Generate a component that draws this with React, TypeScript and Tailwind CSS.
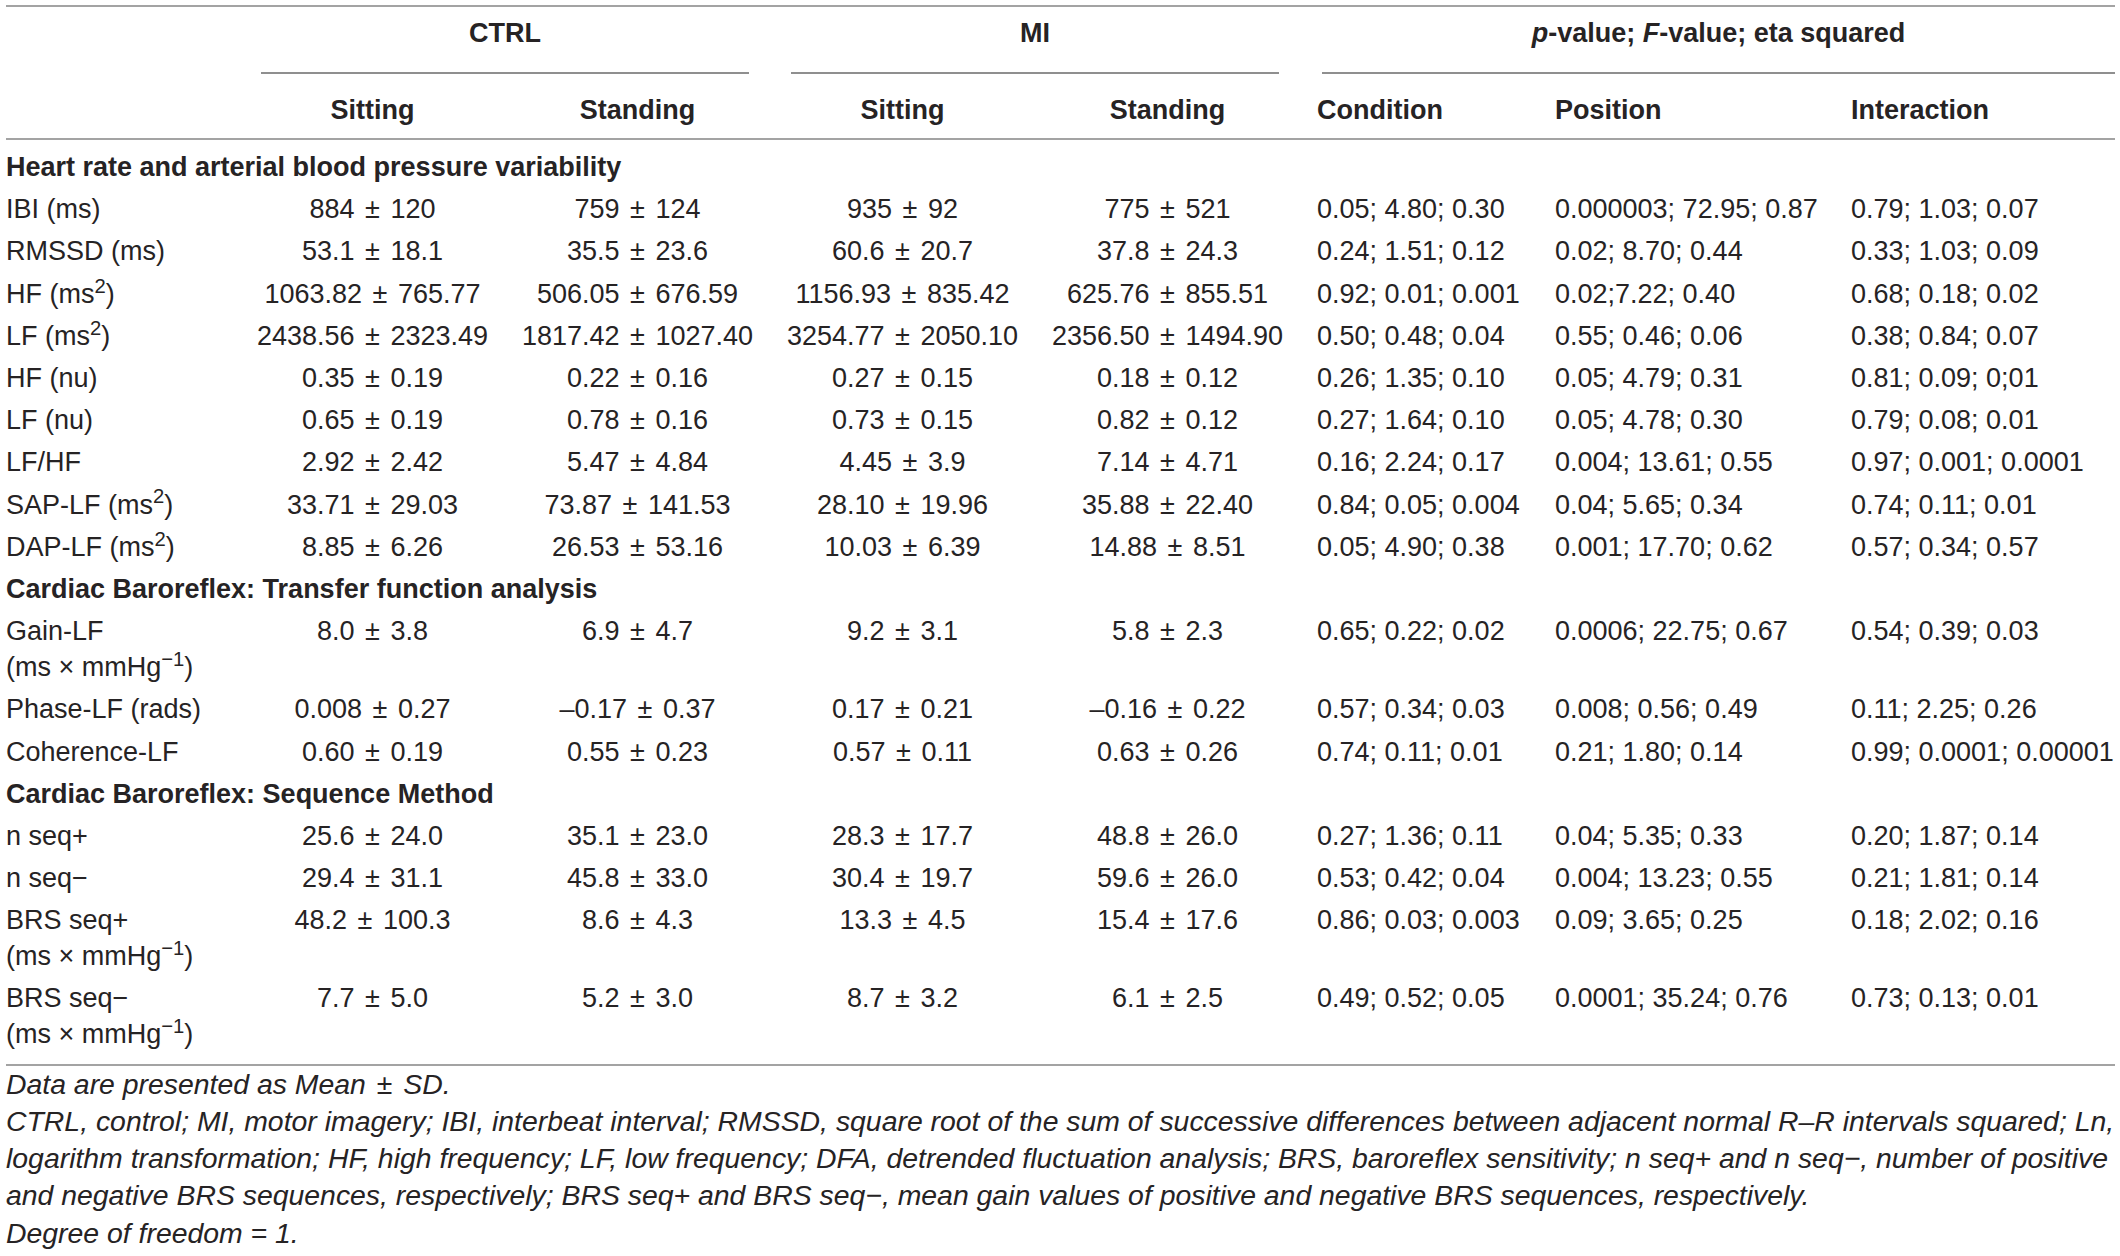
import type { ReactNode } from 'react'

const COLS = 'grid grid-cols-[234px_265px_265px_265px_265px_238px_296px_281px]'

type DataRow = { label: ReactNode; vals: string[]; stats: string[] }
type Row = { section: string } | DataRow

const ms2 = (pre: string) => (
  <>
    {pre} (ms<sup>2</sup>)
  </>
)

const gain = (pre: string) => (
  <>
    {pre}
    <br />
    (ms × mmHg<sup>−1</sup>)
  </>
)

const ROWS: Row[] = [
  { section: 'Heart rate and arterial blood pressure variability' },
  { label: 'IBI (ms)', vals: ['884 ± 120', '759 ± 124', '935 ± 92', '775 ± 521'], stats: ['0.05; 4.80; 0.30', '0.000003; 72.95; 0.87', '0.79; 1.03; 0.07'] },
  { label: 'RMSSD (ms)', vals: ['53.1 ± 18.1', '35.5 ± 23.6', '60.6 ± 20.7', '37.8 ± 24.3'], stats: ['0.24; 1.51; 0.12', '0.02; 8.70; 0.44', '0.33; 1.03; 0.09'] },
  { label: ms2('HF'), vals: ['1063.82 ± 765.77', '506.05 ± 676.59', '1156.93 ± 835.42', '625.76 ± 855.51'], stats: ['0.92; 0.01; 0.001', '0.02;7.22; 0.40', '0.68; 0.18; 0.02'] },
  { label: ms2('LF'), vals: ['2438.56 ± 2323.49', '1817.42 ± 1027.40', '3254.77 ± 2050.10', '2356.50 ± 1494.90'], stats: ['0.50; 0.48; 0.04', '0.55; 0.46; 0.06', '0.38; 0.84; 0.07'] },
  { label: 'HF (nu)', vals: ['0.35 ± 0.19', '0.22 ± 0.16', '0.27 ± 0.15', '0.18 ± 0.12'], stats: ['0.26; 1.35; 0.10', '0.05; 4.79; 0.31', '0.81; 0.09; 0;01'] },
  { label: 'LF (nu)', vals: ['0.65 ± 0.19', '0.78 ± 0.16', '0.73 ± 0.15', '0.82 ± 0.12'], stats: ['0.27; 1.64; 0.10', '0.05; 4.78; 0.30', '0.79; 0.08; 0.01'] },
  { label: 'LF/HF', vals: ['2.92 ± 2.42', '5.47 ± 4.84', '4.45 ± 3.9', '7.14 ± 4.71'], stats: ['0.16; 2.24; 0.17', '0.004; 13.61; 0.55', '0.97; 0.001; 0.0001'] },
  { label: ms2('SAP-LF'), vals: ['33.71 ± 29.03', '73.87 ± 141.53', '28.10 ± 19.96', '35.88 ± 22.40'], stats: ['0.84; 0.05; 0.004', '0.04; 5.65; 0.34', '0.74; 0.11; 0.01'] },
  { label: ms2('DAP-LF'), vals: ['8.85 ± 6.26', '26.53 ± 53.16', '10.03 ± 6.39', '14.88 ± 8.51'], stats: ['0.05; 4.90; 0.38', '0.001; 17.70; 0.62', '0.57; 0.34; 0.57'] },
  { section: 'Cardiac Baroreflex: Transfer function analysis' },
  { label: gain('Gain-LF'), vals: ['8.0 ± 3.8', '6.9 ± 4.7', '9.2 ± 3.1', '5.8 ± 2.3'], stats: ['0.65; 0.22; 0.02', '0.0006; 22.75; 0.67', '0.54; 0.39; 0.03'] },
  { label: 'Phase-LF (rads)', vals: ['0.008 ± 0.27', '–0.17 ± 0.37', '0.17 ± 0.21', '–0.16 ± 0.22'], stats: ['0.57; 0.34; 0.03', '0.008; 0.56; 0.49', '0.11; 2.25; 0.26'] },
  { label: 'Coherence-LF', vals: ['0.60 ± 0.19', '0.55 ± 0.23', '0.57 ± 0.11', '0.63 ± 0.26'], stats: ['0.74; 0.11; 0.01', '0.21; 1.80; 0.14', '0.99; 0.0001; 0.00001'] },
  { section: 'Cardiac Baroreflex: Sequence Method' },
  { label: 'n seq+', vals: ['25.6 ± 24.0', '35.1 ± 23.0', '28.3 ± 17.7', '48.8 ± 26.0'], stats: ['0.27; 1.36; 0.11', '0.04; 5.35; 0.33', '0.20; 1.87; 0.14'] },
  { label: 'n seq−', vals: ['29.4 ± 31.1', '45.8 ± 33.0', '30.4 ± 19.7', '59.6 ± 26.0'], stats: ['0.53; 0.42; 0.04', '0.004; 13.23; 0.55', '0.21; 1.81; 0.14'] },
  { label: gain('BRS seq+'), vals: ['48.2 ± 100.3', '8.6 ± 4.3', '13.3 ± 4.5', '15.4 ± 17.6'], stats: ['0.86; 0.03; 0.003', '0.09; 3.65; 0.25', '0.18; 2.02; 0.16'] },
  { label: gain('BRS seq−'), vals: ['7.7 ± 5.0', '5.2 ± 3.0', '8.7 ± 3.2', '6.1 ± 2.5'], stats: ['0.49; 0.52; 0.05', '0.0001; 35.24; 0.76', '0.73; 0.13; 0.01'] },
]

// mean ± sd, with the wider gap the typeset table has round the sign
function Pm({ v }: { v: string }) {
  const [a, b] = v.split(' ± ')
  return (
    <>
      {a} <span className="mx-[3px]">±</span> {b}
    </>
  )
}

export default function App() {
  return (
    <div className="w-[2120px] h-[1256px] overflow-hidden bg-white text-[#262324] font-['Liberation_Sans',Arial,sans-serif]">
      <div className="ml-[6px] w-[2109px] pt-[5px]">

        {/* Top rule */}
        <div className="h-[2px] bg-[#a3a3a3]" />

        {/* Group headers */}
        <div className={`${COLS} text-[27px] font-bold leading-[36px]`}>
          <div />
          <div className="col-span-2 pt-[8px]">
            <p className="text-center">CTRL</p>
            <div className="mx-[21px] mt-[21px] h-[2px] bg-[#8f8f8f]" />
          </div>
          <div className="col-span-2 pt-[8px]">
            <p className="text-center">MI</p>
            <div className="mx-[21px] mt-[21px] h-[2px] bg-[#8f8f8f]" />
          </div>
          <div className="col-span-3 pt-[8px]">
            <p className="text-center pl-[22px]">
              <i>p</i>-value; <i>F</i>-value; eta squared
            </p>
            <div className="ml-[22px] mt-[21px] h-[2px] bg-[#8f8f8f]" />
          </div>
        </div>

        {/* Sub headers */}
        <div className={`${COLS} text-[27px] font-bold leading-[36px] pt-[18px] pb-[10px]`}>
          <div />
          {['Sitting', 'Standing', 'Sitting', 'Standing'].map((h, i) => (
            <p key={i} className="text-center">{h}</p>
          ))}
          {['Condition', 'Position', 'Interaction'].map(h => (
            <p key={h} className="pl-[17px]">{h}</p>
          ))}
        </div>
        <div className="h-[2px] bg-[#a3a3a3]" />

        {/* Body */}
        <div className="mt-[6px] text-[27px] leading-[36px]">
          {ROWS.map((r, i) =>
            'section' in r ? (
              <p key={i} className="py-[3.1px] font-bold whitespace-nowrap">{r.section}</p>
            ) : (
              <div key={i} className={`${COLS} py-[3.1px] whitespace-nowrap`}>
                <div>{r.label}</div>
                {r.vals.map((v, j) => (
                  <div key={j} className="text-center"><Pm v={v} /></div>
                ))}
                {r.stats.map((s, j) => (
                  <div key={j} className="pl-[17px]">{s}</div>
                ))}
              </div>
            )
          )}
        </div>

        {/* Bottom rule */}
        <div className="mt-[8px] h-[2px] bg-[#a3a3a3]" />

        {/* Footnotes */}
        <div className="text-[28.4px] leading-[37.3px] italic whitespace-nowrap">
          <p>Data are presented as Mean <span className="mx-[3px]">±</span> SD.</p>
          <p>CTRL, control; MI, motor imagery; IBI, interbeat interval; RMSSD, square root of the sum of successive differences between adjacent normal R–R intervals squared; Ln,</p>
          <p>logarithm transformation; HF, high frequency; LF, low frequency; DFA, detrended fluctuation analysis; BRS, baroreflex sensitivity; n seq+ and n seq−, number of positive</p>
          <p>and negative BRS sequences, respectively; BRS seq+ and BRS seq−, mean gain values of positive and negative BRS sequences, respectively.</p>
          <p>Degree of freedom = 1.</p>
        </div>

      </div>
    </div>
  )
}
